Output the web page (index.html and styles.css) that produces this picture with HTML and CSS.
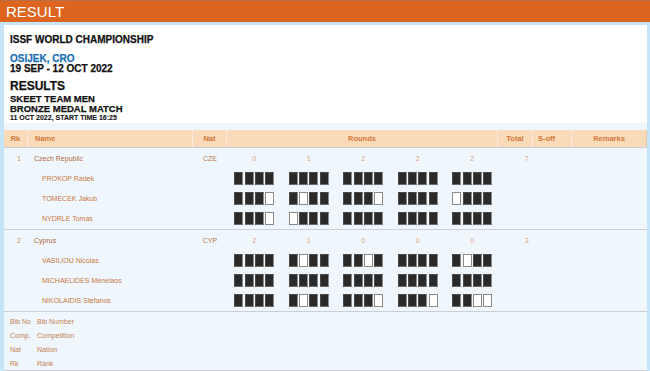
FILE: index.html
```html
<!DOCTYPE html>
<html>
<head>
<meta charset="utf-8">
<link rel="stylesheet" href="styles.css">
</head>
<body>
<div class="titlebar">RESULT</div>
<div class="page">
  <div class="info">
    <div class="l10">ISSF WORLD CHAMPIONSHIP</div>
    <div class="place l10">OSIJEK, CRO</div>
    <div class="l10">19 SEP - 12 OCT 2022</div>
    <div class="big">RESULTS</div>
    <div class="l9 first">SKEET TEAM MEN</div>
    <div class="l9">BRONZE MEDAL MATCH</div>
    <div class="small">11 OCT 2022, START TIME 16:25</div>
  </div>
  <div class="results">
    <div class="thead">
      <div class="th c">Rk</div>
      <div class="th name-h">Name</div>
      <div class="th c">Nat</div>
      <div class="th c">Rounds</div>
      <div class="th c">Total</div>
      <div class="th soff">S-off</div>
      <div class="th c last">Remarks</div>
    </div>

    <div class="group">
      <div class="row team">
        <div class="rk">1</div><div class="nm">Czech Republic</div><div class="nat">CZE</div>
        <div class="sc">0</div><div class="sc">1</div><div class="sc">2</div><div class="sc">2</div><div class="sc">2</div><div class="sc">7</div>
      </div>
      <div class="row">
        <div class="rk"></div><div class="nm mem">PROKOP Radek</div><div class="nat"></div>
        <div class="sc"><div class="shots"><i></i><i></i><i></i><i></i></div></div>
        <div class="sc"><div class="shots"><i></i><i></i><i></i><i></i></div></div>
        <div class="sc"><div class="shots"><i></i><i></i><i></i><i></i></div></div>
        <div class="sc"><div class="shots"><i></i><i></i><i></i><i></i></div></div>
        <div class="sc"><div class="shots"><i></i><i></i><i></i><i></i></div></div>
      </div>
      <div class="row">
        <div class="rk"></div><div class="nm mem">TOMECEK Jakub</div><div class="nat"></div>
        <div class="sc"><div class="shots"><i></i><i></i><i></i><i class="o"></i></div></div>
        <div class="sc"><div class="shots"><i></i><i class="o"></i><i></i><i></i></div></div>
        <div class="sc"><div class="shots"><i></i><i></i><i></i><i class="o"></i></div></div>
        <div class="sc"><div class="shots"><i></i><i></i><i></i><i></i></div></div>
        <div class="sc"><div class="shots"><i class="o"></i><i></i><i></i><i></i></div></div>
      </div>
      <div class="row">
        <div class="rk"></div><div class="nm mem">NYDRLE Tomas</div><div class="nat"></div>
        <div class="sc"><div class="shots"><i></i><i></i><i></i><i class="o"></i></div></div>
        <div class="sc"><div class="shots"><i class="o"></i><i></i><i></i><i></i></div></div>
        <div class="sc"><div class="shots"><i></i><i></i><i></i><i></i></div></div>
        <div class="sc"><div class="shots"><i></i><i></i><i></i><i></i></div></div>
        <div class="sc"><div class="shots"><i></i><i></i><i></i><i></i></div></div>
      </div>
    </div>

    <div class="group">
      <div class="row team">
        <div class="rk">2</div><div class="nm">Cyprus</div><div class="nat">CYP</div>
        <div class="sc">2</div><div class="sc">1</div><div class="sc">0</div><div class="sc">0</div><div class="sc">0</div><div class="sc">3</div>
      </div>
      <div class="row">
        <div class="rk"></div><div class="nm mem">VASILIOU Nicolas</div><div class="nat"></div>
        <div class="sc"><div class="shots"><i></i><i></i><i></i><i></i></div></div>
        <div class="sc"><div class="shots"><i></i><i class="o"></i><i></i><i></i></div></div>
        <div class="sc"><div class="shots"><i></i><i></i><i class="o"></i><i></i></div></div>
        <div class="sc"><div class="shots"><i></i><i></i><i></i><i></i></div></div>
        <div class="sc"><div class="shots"><i></i><i class="o"></i><i></i><i></i></div></div>
      </div>
      <div class="row">
        <div class="rk"></div><div class="nm mem">MICHAELIDES Menelaos</div><div class="nat"></div>
        <div class="sc"><div class="shots"><i></i><i></i><i></i><i></i></div></div>
        <div class="sc"><div class="shots"><i></i><i></i><i></i><i></i></div></div>
        <div class="sc"><div class="shots"><i></i><i></i><i></i><i></i></div></div>
        <div class="sc"><div class="shots"><i></i><i></i><i></i><i></i></div></div>
        <div class="sc"><div class="shots"><i></i><i></i><i></i><i></i></div></div>
      </div>
      <div class="row">
        <div class="rk"></div><div class="nm mem">NIKOLAIDIS Stefanos</div><div class="nat"></div>
        <div class="sc"><div class="shots"><i></i><i></i><i></i><i></i></div></div>
        <div class="sc"><div class="shots"><i></i><i class="o"></i><i></i><i></i></div></div>
        <div class="sc"><div class="shots"><i></i><i></i><i></i><i class="o"></i></div></div>
        <div class="sc"><div class="shots"><i></i><i></i><i></i><i class="o"></i></div></div>
        <div class="sc"><div class="shots"><i></i><i></i><i class="o"></i><i class="o"></i></div></div>
      </div>
    </div>

    <div class="legend">
      <div>Bib No</div><div>Bib Number</div>
      <div>Comp.</div><div>Competition</div>
      <div>Nat</div><div>Nation</div>
      <div>Rk</div><div>Rank</div>
    </div>
  </div>
</div>
</body>
</html>
```

FILE: styles.css
```css
html, body {
  margin: 0;
  padding: 0;
}
body {
  background: #c5e4f7;
  font-family: "Liberation Sans", Arial, sans-serif;
  width: 650px;
  height: 371px;
  overflow: hidden;
}
.titlebar {
  height: 21px;
  border-top: 1px solid #b8704a;
  background: #dd6520;
  color: #ffffff;
  font-size: 15px;
  line-height: 22px;
  padding-left: 6px;
}
.page {
  margin: 3px 3px 0 4px;
}
.info {
  background: #ffffff;
  padding: 10px 6px 1px;
  color: #111111;
  font-weight: 700;
  -webkit-text-stroke: 0.25px #111111;
}
.l10 {
  font-size: 10px;
  line-height: 10px;
}
.place {
  margin-top: 9px;
  color: #1c6fb3;
  -webkit-text-stroke: 0.25px #1c6fb3;
}
.big {
  margin-top: 6px;
  font-size: 12px;
  line-height: 12px;
}
.l9 {
  font-size: 9.5px;
  line-height: 10px;
}
.l9.first {
  margin-top: 2px;
}
.small {
  font-size: 7px;
  line-height: 8px;
  -webkit-text-stroke: 0.1px #111111;
}
.results {
  background: #f0f7fc;
  padding-top: 7px;
}
.thead {
  display: grid;
  grid-template-columns: 24px 165px 34px 271px 35px 39px 1fr;
  height: 17px;
  background: #f9dbb9;
  border-bottom: 1px solid #c9cfd5;
}
.th {
  font-size: 7.5px;
  font-weight: 700;
  color: #d4773c;
  line-height: 17px;
  border-right: 1px solid #fcebd8;
}
.th.c {
  text-align: center;
}
.th.name-h {
  padding-left: 7px;
}
.th.soff {
  padding-left: 5px;
}
.th.last {
  border-right: 1px solid #e9c8a4;
}
.group {
  padding-bottom: 1px;
  border-bottom: 1px solid #c9cfd5;
}
.row {
  display: grid;
  grid-template-columns: 30px 159px 34px repeat(6, 54.5px) 1fr;
  height: 20px;
  align-items: center;
  font-size: 7px;
}
.rk {
  text-align: center;
  color: #c88a66;
}
.nm {
  color: #b06a40;
}
.nm.mem {
  padding-left: 8px;
  color: #c97744;
}
.nat {
  text-align: center;
  color: #b5774f;
}
.sc {
  text-align: center;
  color: #d9a183;
}
.shots {
  display: flex;
  justify-content: center;
  gap: 1.4px;
}
.shots i {
  display: block;
  width: 7px;
  height: 11px;
  background: #2a2a2a;
  border: 1px solid #4a4a4a;
  border-right-color: #8c8c8c;
  border-bottom-color: #6a6a6a;
}
.shots i.o {
  background: #ffffff;
  border: 1px solid #8a8a8a;
}
.legend {
  display: grid;
  grid-template-columns: 27px 1fr;
  grid-auto-rows: 14px;
  align-items: center;
  padding: 2px 0 0 6px;
  border-bottom: 1px solid #c9cfd5;
  font-size: 7px;
  color: #c47e56;
}
```
